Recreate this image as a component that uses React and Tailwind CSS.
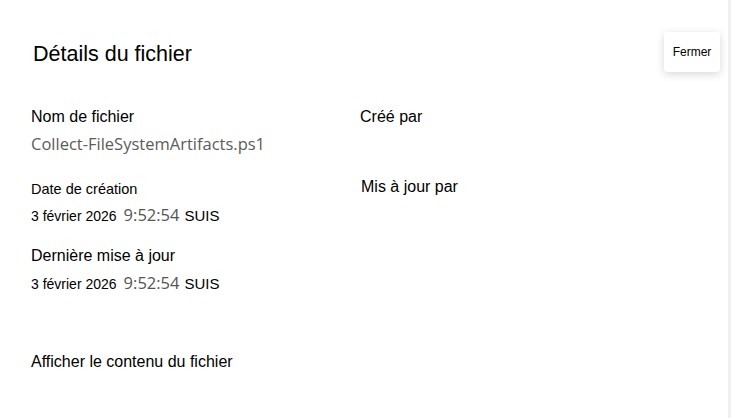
import React from 'react'

function Dt({ date, time }) {
  return (
    <div className="flex items-baseline mt-[5px]">
      <span className="text-[14px] text-black">{date}</span>
      <span className="ml-[7px] text-[16.5px] text-[#555] font-['Open_Sans',sans-serif]">{time}</span>
      <span className="ml-[5px] text-[15px] text-black">SUIS</span>
    </div>
  )
}

export default function App() {
  return (
    <div className="w-[731px] h-[418px] bg-white relative border-r-[3px] border-[#f0f0f0] font-['Liberation_Sans',Arial,sans-serif] text-black">
      <button className="absolute left-[664px] top-[32px] w-[56px] h-[40px] bg-white rounded-[3px] shadow-[0_2px_8px_rgba(0,0,0,0.16)] text-[12px] text-black">
        Fermer
      </button>
      <div className="pl-[33px] pt-[41px]">
        <h1 className="text-[21.5px] leading-[26px]">Détails du fichier</h1>
      </div>
      <div className="flex pl-[31px] pt-[40px]">
        <div className="w-[329px]">
          <div className="text-[16px] leading-[20px]">Nom de fichier</div>
          <div className="mt-[5px] text-[16.5px] leading-[24px] text-[#5c5c5c] font-['Open_Sans',sans-serif]">Collect-FileSystemArtifacts.ps1</div>
          <div className="mt-[24px] text-[14.5px] leading-[18px]">Date de création</div>
          <Dt date="3 février 2026" time="9:52:54" />
          <div className="mt-[18px] text-[16px] leading-[20px]">Dernière mise à jour</div>
          <Dt date="3 février 2026" time="9:52:54" />
        </div>
        <div>
          <div className="text-[16px] leading-[20px]">Créé par</div>
          <div className="mt-[50px] ml-[1px] text-[16px] leading-[20px]">Mis à jour par</div>
        </div>
      </div>
      <div className="pl-[31px] pt-[56px] text-[16px] leading-[20px]">Afficher le contenu du fichier</div>
    </div>
  )
}
